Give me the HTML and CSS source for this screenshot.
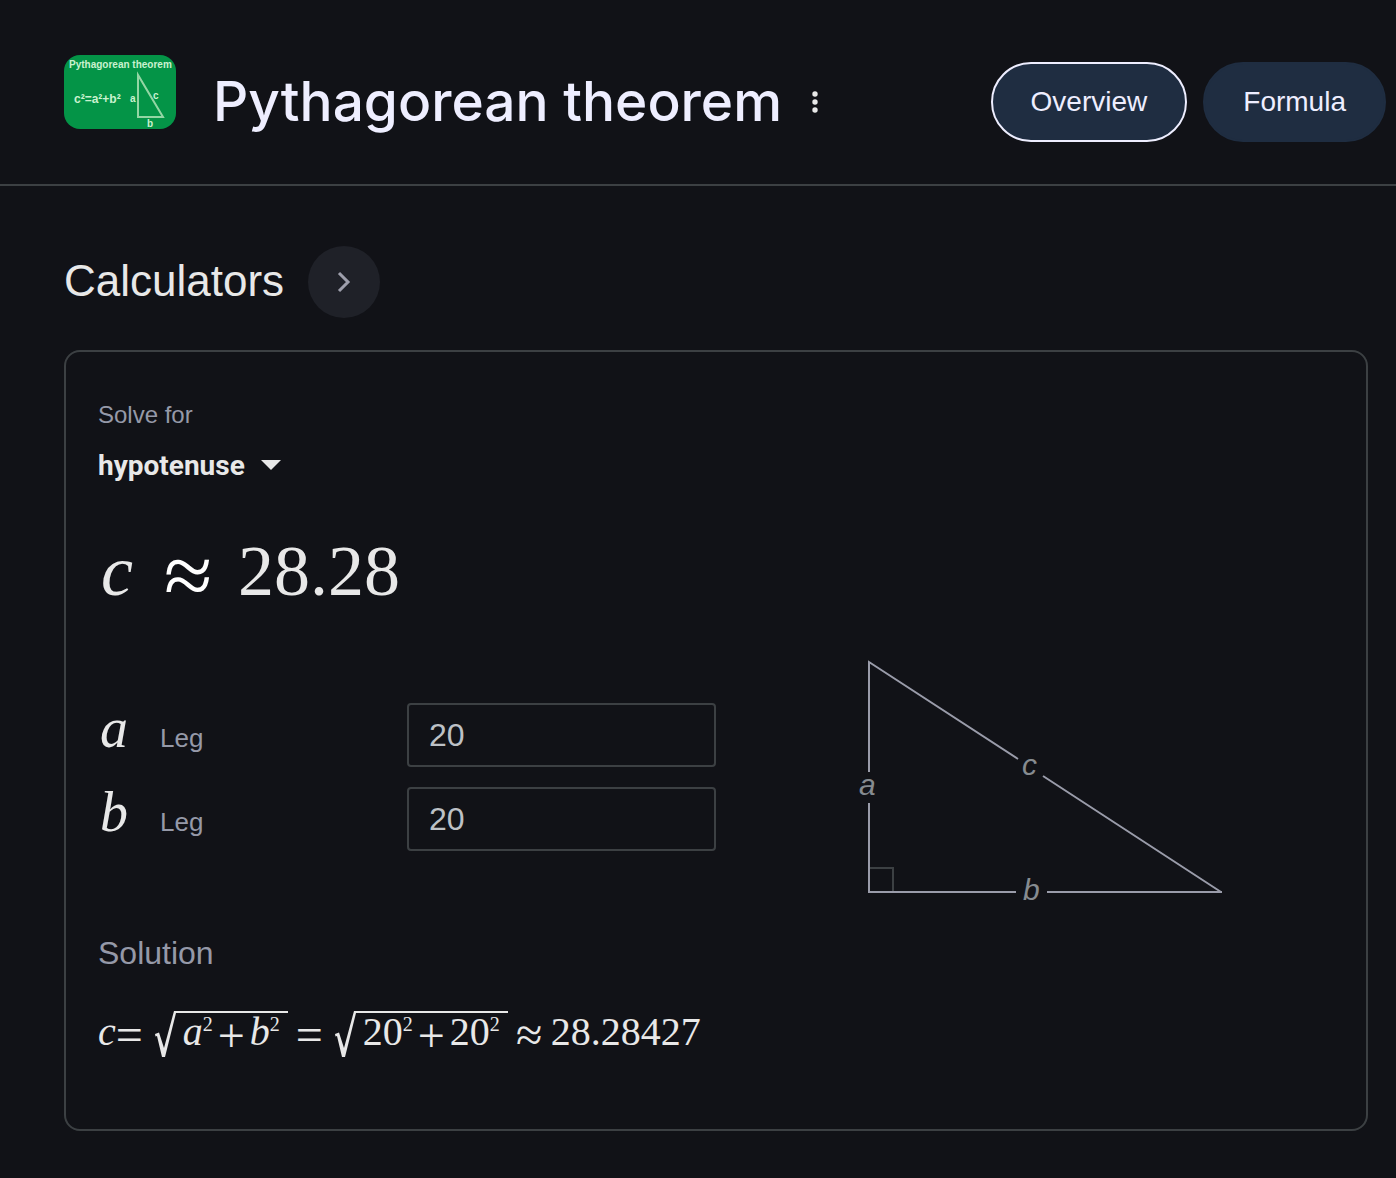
FILE: index.html
```html
<!DOCTYPE html>
<html lang="en">
<head>
<meta charset="utf-8">
<meta name="viewport" content="width=device-width, initial-scale=1">
<title>Pythagorean theorem</title>
<link rel="stylesheet" href="styles.css">
</head>
<body>
<header class="topbar">
  <svg class="thumb" viewBox="0 0 112 74" role="img" aria-label="Pythagorean theorem diagram">
    <rect width="112" height="74" fill="#049447"/>
    <g class="thumb-text">
      <text x="5" y="13" font-size="10">Pythagorean theorem</text>
      <text x="10" y="48" font-size="12">c²=a²+b²</text>
      <text x="66" y="47" font-size="10">a</text>
      <text x="89" y="44" font-size="10">c</text>
      <text x="83" y="72" font-size="10">b</text>
    </g>
    <path d="M74 20V62H99Z" fill="none" stroke="#93d6a4" stroke-width="2"/>
  </svg>
  <h1 class="title">Pythagorean theorem</h1>
  <button class="more" type="button" aria-label="More options">
    <svg width="8" height="24" viewBox="0 0 8 24" fill="#e8e8e8"><circle cx="4" cy="4" r="2.7"/><circle cx="4" cy="12" r="2.7"/><circle cx="4" cy="20" r="2.7"/></svg>
  </button>
  <nav class="tabs">
    <a class="tab tab-active" href="#overview">Overview</a>
    <a class="tab" href="#formula">Formula</a>
  </nav>
</header>
<main class="content">
  <div class="section-head">
    <h2 class="section-title">Calculators</h2>
    <button class="next" type="button" aria-label="More calculators">
      <svg width="24" height="24" viewBox="0 0 24 24" fill="none" stroke="#9e9fac" stroke-width="3"><path d="M7 3L16 12L7 21"/></svg>
    </button>
  </div>
  <section class="card">
    <label class="solve-label" for="solve">Solve for</label>
    <div class="picker">
      <select class="solve" id="solve"><option>hypotenuse</option></select>
      <svg class="caret" width="20" height="10" viewBox="0 0 20 10"><path d="M0 0H20L10 10Z" fill="#e8e8e8"/></svg>
    </div>
    <div class="result"><i>c</i><span class="approx">≈</span><span>28.28</span></div>
    <div class="work">
      <form class="fields">
        <div class="field">
          <label class="field-label" for="leg-a"><i class="var">a</i><span>Leg</span></label>
          <input class="field-input" id="leg-a" type="text" value="20">
        </div>
        <div class="field">
          <label class="field-label" for="leg-b"><i class="var">b</i><span>Leg</span></label>
          <input class="field-input" id="leg-b" type="text" value="20">
        </div>
      </form>
      <svg class="diagram" width="368" height="234" viewBox="0 0 368 234">
        <path d="M13 208H37V231" class="corner"/>
        <path d="M13 112V2L162 99M187 116L365 232M366 232H191M160 232H12M13 232V143" class="sides"/>
        <text x="3" y="135">a</text>
        <text x="166" y="115">c</text>
        <text x="167" y="240">b</text>
      </svg>
    </div>
    <h3 class="solution-title">Solution</h3>
    <div class="equation">
      <i>c</i><span class="op">=</span>
      <span class="root">
        <svg class="radical" width="21" height="47" viewBox="0 0 21 47"><path d="M0 23L4 21.500L9 37L19 0H21V2L10 46H7L2 25L0.500 25.500Z"/></svg>
        <span class="radicand"><i>a</i><sup>2</sup><span class="op op-in">+</span><i>b</i><sup>2</sup></span>
      </span>
      <span class="op op-mid">=</span>
      <span class="root">
        <svg class="radical" width="21" height="47" viewBox="0 0 21 47"><path d="M0 23L4 21.500L9 37L19 0H21V2L10 46H7L2 25L0.500 25.500Z"/></svg>
        <span class="radicand">20<sup>2</sup><span class="op op-in">+</span>20<sup>2</sup></span>
      </span>
      <span class="op op-mid op-approx">≈</span>
      <span>28.28427</span>
    </div>
  </section>
</main>
</body>
</html>
```
FILE: styles.css
```css
* { box-sizing: border-box; }
body {
  margin: 0;
  background: #111217;
  color: #e8e8e8;
  font-family: "Liberation Sans", Arial, sans-serif;
}
h1, h2, h3 { margin: 0; font-weight: 400; }
button { border: 0; padding: 0; background: none; cursor: pointer; }

.topbar {
  display: flex;
  align-items: center;
  height: 186px;
  padding: 20px 10px 0 64px;
  border-bottom: 2px solid #3c4043;
}
.thumb {
  flex: none;
  width: 112px;
  height: 74px;
  margin-bottom: 20px;
  border-radius: 16px;
}
.thumb-text { fill: #c9f2cf; font-family: "Liberation Sans", Arial, sans-serif; font-weight: 700; }
.title {
  margin: 0 0 2px 37px;
  color: #eeeeff;
  font: 500 55px/72px "Inter", sans-serif;
  white-space: nowrap;
}
.more { display: flex; margin-left: 29px; }
.tabs { display: flex; gap: 16px; margin-left: auto; }
.tab {
  padding: 0 38px;
  border: 2px solid #1f2d41;
  border-radius: 40px;
  background: #1f2d41;
  color: #eeeeff;
  font-size: 28px;
  line-height: 76px;
  text-decoration: none;
}
.tab-active { border-color: #eeeeff; }

.content { padding: 60px 28px 47px 64px; }
.section-head { display: flex; align-items: center; gap: 24px; }
.section-title { margin-bottom: 2px; font-size: 44px; line-height: 52px; }
.next {
  display: flex;
  align-items: center;
  justify-content: center;
  width: 72px;
  height: 72px;
  border-radius: 50%;
  background: #1f2128;
}
.card {
  margin-top: 32px;
  padding: 48px 32px 78px;
  border: 2px solid #3c4043;
  border-radius: 16px;
}
.solve-label { display: block; color: #9599a8; font-size: 24px; line-height: 30px; }
.picker { display: flex; align-items: center; gap: 16px; margin-top: 16px; }
.solve {
  appearance: none;
  padding: 0;
  border: 0;
  background: none;
  color: #e8e8e8;
  font: 700 28px/40px Roboto, sans-serif;
}
.caret { margin-bottom: 2px; }
.result {
  display: flex;
  align-items: baseline;
  height: 80px;
  margin-top: 45px;
  font: 72px/80px "Liberation Serif", "Times New Roman", serif;
}
.result i { width: 66px; padding-left: 3px; }
.approx { align-self: center; width: 74px; padding-top: 10px; color: #fff; font-size: 88px; }
.work { display: grid; grid-template-columns: 1fr 1fr; align-items: center; margin-top: 49px; }
.fields { display: grid; gap: 20px; }
.field { display: grid; grid-template-columns: 1fr 1fr; align-items: center; height: 64px; }
.field-label { display: flex; align-items: baseline; color: #9599a8; font-size: 26px; line-height: 30px; }
.var {
  width: 62px;
  padding-left: 2px;
  color: #e8e8e8;
  font: italic 56px/40px "Liberation Serif", "Times New Roman", serif;
}
.field-label { padding-bottom: 10px; }
.field-input {
  width: 100%;
  height: 64px;
  padding: 0 20px;
  border: 2px solid #3c4043;
  border-radius: 4px;
  background: none;
  color: #bdc1c6;
  font: 32px/36px "Liberation Sans", Arial, sans-serif;
}
.diagram { margin-left: 140px; overflow: visible; }
.diagram text { fill: #868b90; font-size: 30px; font-style: italic; }
.sides { fill: none; stroke: #9a9caa; stroke-width: 2; }
.corner { fill: none; stroke: #3c4043; stroke-width: 2; }
.solution-title { margin-top: 41px; color: #9599a8; font-size: 32px; line-height: 36px; }
.equation {
  display: flex;
  align-items: baseline;
  height: 40px;
  margin-top: 40px;
  font: 40px/38px "Liberation Serif", "Times New Roman", serif;
}
.op { align-self: center; width: 27px; padding-top: 8px; font-size: 48px; line-height: 28px; text-align: center; }
.op-in { margin: 0 5px; }
.op-mid { margin-left: 8px; }
.op-approx { margin-right: 8px; }
.root { display: flex; align-items: baseline; margin-left: 12px; }
.radical { align-self: flex-start; fill: #e8e8e8; }
.radicand {
  display: flex;
  align-items: baseline;
  padding: 0 8px 0 7px;
  border-top: 2px solid #e8e8e8;
}
.radicand sup { align-self: flex-start; font-size: 20px; line-height: 22px; }
```
